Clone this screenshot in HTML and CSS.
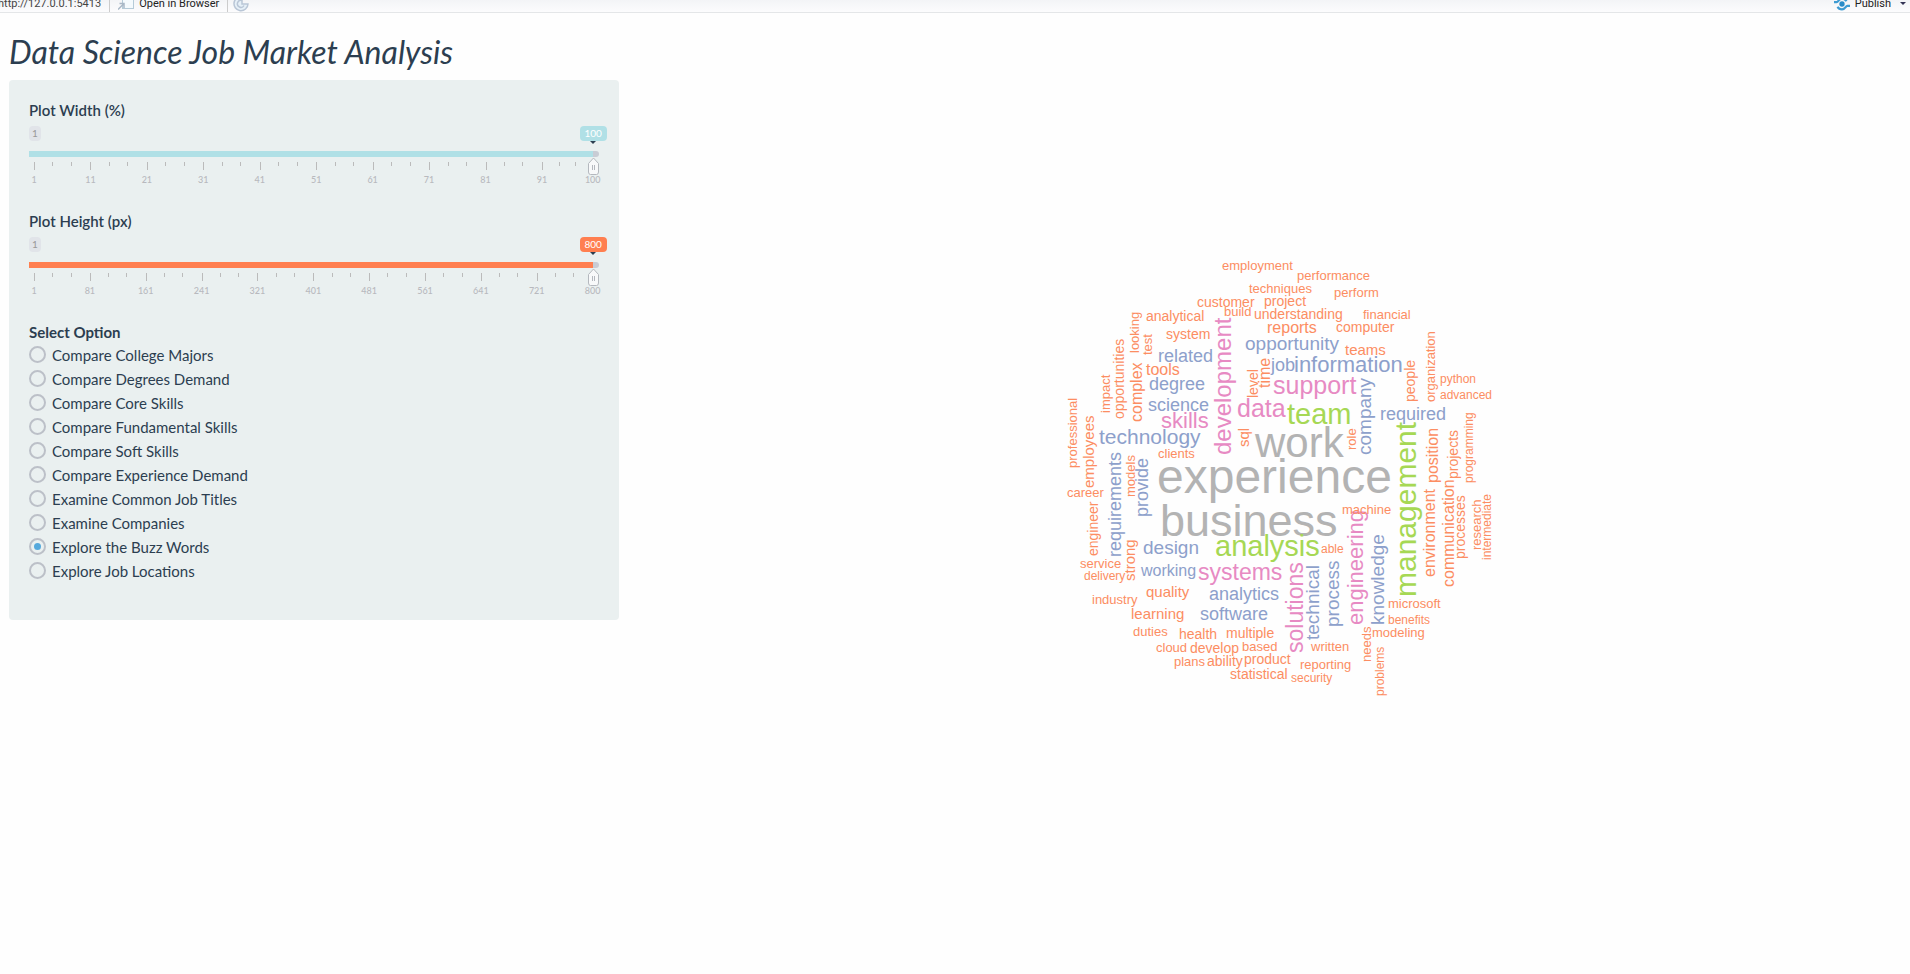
FILE: index.html
```html
<!DOCTYPE html>
<html lang="en">
<head>
<meta charset="utf-8">
<title>Data Science Job Market Analysis</title>
<link rel="stylesheet" href="styles.css">
</head>
<body>
<header class="viewer-bar">
  <span class="url">http://127.0.0.1:5413</span>
  <span class="sep"></span>
  <button class="tool" type="button">
    <svg width="16" height="14" viewBox="0 0 16 14" aria-hidden="true"><rect x="4.5" y=".5" width="11" height="11" fill="#f4fafd" stroke="#b5cbd8"/><path d="M5 1h10v2H5z" fill="#a9cfe6"/><path d="M0 12.500L5.500 7M1.500 6.500H6V11" fill="none" stroke="#a9b8c6" stroke-width="1.500"/></svg>
    <span>Open in Browser</span>
  </button>
  <span class="sep"></span>
  <button class="tool reload" type="button" aria-label="Reload">
    <svg width="16" height="16" viewBox="0 0 16 16" aria-hidden="true"><path d="M10 1A7 7 0 1 0 15 8H9V4" fill="#e6f0f8" stroke="#b9c6d6" stroke-width="1.500"/><path d="M9 4.500A3.500 3.500 0 1 0 11 9.500" fill="none" stroke="#b9c6d6" stroke-width="1.500"/></svg>
  </button>
  <button class="tool publish" type="button">
    <svg width="16" height="16" viewBox="0 0 18 16" aria-hidden="true"><circle cx="9" cy="8" r="3" fill="#2a8cc8"/><path d="M0 6h3c2 0 2-4 6-4 3 0 4 1 5 3M18 10h-3c-2 0-2 4-6 4-3 0-4-1-5-3" fill="none" stroke="#3d9bd2" stroke-width="2.500"/></svg>
    <span>Publish</span>
    <i class="caret"></i>
  </button>
</header>

<h1>Data Science Job Market Analysis</h1>

<div class="row">
  <div class="side-col">
    <form class="panel">
      <div class="slider blue">
        <label for="plot-width">Plot Width (%)</label>
        <div class="tags"><span class="tag min">1</span><output class="tag now" for="plot-width">100</output></div>
        <input id="plot-width" type="range" min="1" max="100" value="100">
        <div class="scale">
          <span><b>1</b></span><span><b>11</b></span><span><b>21</b></span><span><b>31</b></span><span><b>41</b></span><span><b>51</b></span><span><b>61</b></span><span><b>71</b></span><span><b>81</b></span><span class="short"><b>91</b></span><span class="end"><b>100</b></span>
        </div>
      </div>
      <div class="slider coral">
        <label for="plot-height">Plot Height (px)</label>
        <div class="tags"><span class="tag min">1</span><output class="tag now" for="plot-height">800</output></div>
        <input id="plot-height" type="range" min="1" max="800" value="800">
        <div class="scale">
          <span><b>1</b></span><span><b>81</b></span><span><b>161</b></span><span><b>241</b></span><span><b>321</b></span><span><b>401</b></span><span><b>481</b></span><span><b>561</b></span><span><b>641</b></span><span><b>721</b></span><span class="end"><b>800</b></span>
        </div>
      </div>
      <fieldset class="options">
        <legend>Select Option</legend>
        <label><input type="radio" name="option">Compare College Majors</label>
        <label><input type="radio" name="option">Compare Degrees Demand</label>
        <label><input type="radio" name="option">Compare Core Skills</label>
        <label><input type="radio" name="option">Compare Fundamental Skills</label>
        <label><input type="radio" name="option">Compare Soft Skills</label>
        <label><input type="radio" name="option">Compare Experience Demand</label>
        <label><input type="radio" name="option">Examine Common Job Titles</label>
        <label><input type="radio" name="option">Examine Companies</label>
        <label><input type="radio" name="option" checked>Explore the Buzz Words</label>
        <label><input type="radio" name="option">Explore Job Locations</label>
      </fieldset>
    </form>
  </div>

  <main class="plot">
    <svg class="cloud" width="430" height="450" viewBox="1065 255 430 450" role="img" aria-label="Buzz word cloud">
      <g class="gray">
        <text x="1157" y="493" font-size="48">experience</text>
        <text x="1160" y="536" font-size="45">business</text>
        <text x="1255" y="457" font-size="42">work</text>
      </g>
      <g class="green">
        <text x="1215" y="556" font-size="29">analysis</text>
        <text x="1287" y="424" font-size="29">team</text>
        <text transform="translate(1416 597) rotate(-90)" font-size="30">management</text>
      </g>
      <g class="pink">
        <text x="1237" y="417" font-size="25">data</text>
        <text x="1273" y="394" font-size="25">support</text>
        <text x="1198" y="580" font-size="23">systems</text>
        <text x="1161" y="428" font-size="22">skills</text>
        <text transform="translate(1231 455) rotate(-90)" font-size="24">development</text>
        <text transform="translate(1303 653) rotate(-90)" font-size="23">solutions</text>
        <text transform="translate(1363 625) rotate(-90)" font-size="22">engineering</text>
      </g>
      <g class="blue-words">
        <text x="1099" y="444" font-size="21">technology</text>
        <text x="1294" y="372" font-size="22">information</text>
        <text x="1271" y="371" font-size="18">job</text>
        <text x="1245" y="350" font-size="19">opportunity</text>
        <text x="1158" y="362" font-size="18">related</text>
        <text x="1149" y="390" font-size="18">degree</text>
        <text x="1148" y="411" font-size="18">science</text>
        <text x="1380" y="420" font-size="18">required</text>
        <text x="1143" y="554" font-size="19">design</text>
        <text x="1141" y="576" font-size="16">working</text>
        <text x="1209" y="600" font-size="18">analytics</text>
        <text x="1200" y="620" font-size="18">software</text>
        <text transform="translate(1371 455) rotate(-90)" font-size="19">company</text>
        <text transform="translate(1319 640) rotate(-90)" font-size="19">technical</text>
        <text transform="translate(1339 627) rotate(-90)" font-size="19">process</text>
        <text transform="translate(1384 625) rotate(-90)" font-size="19">knowledge</text>
        <text transform="translate(1121 557) rotate(-90)" font-size="18">requirements</text>
        <text transform="translate(1148 517) rotate(-90)" font-size="18">provide</text>
      </g>
      <g class="orange">
        <text x="1222" y="270" font-size="13">employment</text>
        <text x="1297" y="280" font-size="13">performance</text>
        <text x="1249" y="293" font-size="13">techniques</text>
        <text x="1334" y="297" font-size="13">perform</text>
        <text x="1197" y="307" font-size="14">customer</text>
        <text x="1264" y="306" font-size="14">project</text>
        <text x="1224" y="316" font-size="13">build</text>
        <text x="1254" y="319" font-size="14">understanding</text>
        <text x="1363" y="319" font-size="13">financial</text>
        <text x="1146" y="321" font-size="14">analytical</text>
        <text x="1166" y="339" font-size="14">system</text>
        <text x="1267" y="333" font-size="16">reports</text>
        <text x="1336" y="332" font-size="14">computer</text>
        <text x="1345" y="355" font-size="15">teams</text>
        <text x="1146" y="375" font-size="16">tools</text>
        <text x="1440" y="383" font-size="12">python</text>
        <text x="1440" y="399" font-size="12">advanced</text>
        <text x="1158" y="458" font-size="13">clients</text>
        <text x="1067" y="497" font-size="13">career</text>
        <text x="1080" y="568" font-size="13">service</text>
        <text x="1084" y="580" font-size="12">delivery</text>
        <text x="1092" y="604" font-size="13">industry</text>
        <text x="1146" y="597" font-size="15">quality</text>
        <text x="1131" y="619" font-size="15">learning</text>
        <text x="1133" y="636" font-size="13">duties</text>
        <text x="1179" y="639" font-size="14">health</text>
        <text x="1226" y="638" font-size="14">multiple</text>
        <text x="1156" y="652" font-size="13">cloud</text>
        <text x="1190" y="653" font-size="14">develop</text>
        <text x="1242" y="651" font-size="13">based</text>
        <text x="1174" y="666" font-size="13">plans</text>
        <text x="1207" y="666" font-size="14">ability</text>
        <text x="1244" y="664" font-size="14">product</text>
        <text x="1230" y="679" font-size="14">statistical</text>
        <text x="1291" y="682" font-size="12">security</text>
        <text x="1300" y="669" font-size="13">reporting</text>
        <text x="1311" y="651" font-size="13">written</text>
        <text x="1321" y="553" font-size="12">able</text>
        <text x="1342" y="514" font-size="13">machine</text>
        <text x="1388" y="608" font-size="13">microsoft</text>
        <text x="1388" y="624" font-size="12">benefits</text>
        <text x="1372" y="637" font-size="13">modeling</text>
        <text transform="translate(1139 353) rotate(-90)" font-size="13">looking</text>
        <text transform="translate(1152 355) rotate(-90)" font-size="13">test</text>
        <text transform="translate(1124 419) rotate(-90)" font-size="14">opportunities</text>
        <text transform="translate(1142 422) rotate(-90)" font-size="16">complex</text>
        <text transform="translate(1110 413) rotate(-90)" font-size="13">impact</text>
        <text transform="translate(1077 468) rotate(-90)" font-size="13">professional</text>
        <text transform="translate(1094 488) rotate(-90)" font-size="15">employees</text>
        <text transform="translate(1135 497) rotate(-90)" font-size="13">models</text>
        <text transform="translate(1249 447) rotate(-90)" font-size="15">sql</text>
        <text transform="translate(1258 398) rotate(-90)" font-size="14">level</text>
        <text transform="translate(1270 388) rotate(-90)" font-size="16">time</text>
        <text transform="translate(1356 450) rotate(-90)" font-size="13">role</text>
        <text transform="translate(1415 402) rotate(-90)" font-size="14">people</text>
        <text transform="translate(1435 402) rotate(-90)" font-size="13">organization</text>
        <text transform="translate(1438 483) rotate(-90)" font-size="16">position</text>
        <text transform="translate(1458 479) rotate(-90)" font-size="14">projects</text>
        <text transform="translate(1473 483) rotate(-90)" font-size="12">programming</text>
        <text transform="translate(1435 577) rotate(-90)" font-size="16">environment</text>
        <text transform="translate(1454 587) rotate(-90)" font-size="16">communication</text>
        <text transform="translate(1465 559) rotate(-90)" font-size="14">processes</text>
        <text transform="translate(1481 550) rotate(-90)" font-size="13">research</text>
        <text transform="translate(1491 560) rotate(-90)" font-size="12">intermediate</text>
        <text transform="translate(1098 556) rotate(-90)" font-size="14">engineer</text>
        <text transform="translate(1135 581) rotate(-90)" font-size="15">strong</text>
        <text transform="translate(1371 662) rotate(-90)" font-size="13">needs</text>
        <text transform="translate(1384 696) rotate(-90)" font-size="12">problems</text>
      </g>
    </svg>
  </main>
</div>
</body>
</html>
```
FILE: styles.css
```css
* { box-sizing: border-box; }

body {
  margin: 0;
  background: #fefefe;
  color: #2c3e50;
  font: 15px/21px Lato, sans-serif;
}

/* Viewer toolbar, scrolled partly out of view */
.viewer-bar {
  display: flex;
  align-items: center;
  height: 20px;
  margin-top: -7px;
  padding: 2px 4px 0 0;
  background: linear-gradient(#eef0f3, #fcfcfd);
  border-bottom: 1px solid #e4e6e8;
  color: #444;
  font: 11px/16px Roboto, sans-serif;
}
.url { margin-left: -2px; }
.sep { width: 1px; height: 16px; margin: 0 8px; background: #ccc; }
.tool {
  display: flex;
  align-items: center;
  gap: 5px;
  padding: 0;
  border: 0;
  background: none;
  color: #222;
  font: inherit;
}
.tool.reload { margin-left: -3px; }
.tool.publish { margin-left: auto; }
.caret {
  margin-left: 4px;
  border: 3px solid transparent;
  border-top-color: #335;
  border-bottom: 0;
}

h1 {
  margin: 19px 0 8px 9px;
  font: italic 400 32px/40px Lato, sans-serif;
}

.row { display: flex; align-items: flex-start; }
.side-col { width: 33.3333%; padding: 0 18px 0 9px; }
.panel {
  padding: 20px 20px 37px;
  border-radius: 4px;
  background: #eaf0f0;
}

.slider { height: 111px; }
.slider > label { display: block; font-weight: 600; }
.blue { --bar: #b0e0e6; }
.coral { --bar: #ff7f50; }

.tags { display: flex; justify-content: space-between; margin: 5px 0 10px; }
.tag {
  position: relative;
  padding: 0 3px;
  border-radius: 4px;
  font-size: 10px;
  line-height: 15px;
  text-align: center;
}
.tag.min { width: 12px; background: #e1e4e9; color: #999; }
.tag.now { width: 27px; margin-right: -8px; background: var(--bar); color: #fff; }
.tag.now::after {
  content: "";
  position: absolute;
  top: 100%;
  left: 50%;
  margin-left: -3px;
  border: 3px solid transparent;
  border-top-color: #2c3e50;
  border-bottom: 0;
}

input[type="range"] {
  appearance: none;
  display: block;
  width: 100%;
  height: 6px;
  margin: 0;
  background: none;
}
input[type="range"]::-webkit-slider-runnable-track {
  height: 6px;
  border-radius: 0 4px 4px 0;
  background: linear-gradient(90deg, var(--bar) calc(100% - 6px), #c8ccd4 calc(100% - 6px));
}
input[type="range"]::-webkit-slider-thumb {
  appearance: none;
  width: 11px;
  height: 18px;
  margin-top: 6px;
  background: url("data:image/svg+xml,%3Csvg xmlns='http://www.w3.org/2000/svg' width='11' height='18'%3E%3Cpath d='M5.500 1L10.500 6.500V15Q10.500 17.500 8.500 17.500H2.500Q.5 17.500 .5 15V6.500Z' fill='%23f8f9fa' stroke='%23b4b8be'/%3E%3Cpath d='M4.500 8v5M6.500 8v5' stroke='%23b4b8be'/%3E%3C/svg%3E");
}

.scale { display: flex; margin: 5px 6px 0 5px; }
.scale span {
  flex: 10 1 0;
  min-width: 0;
  height: 24px;
  padding-top: 11px;
  background:
    linear-gradient(#bbb, #bbb) 0 0 / 1px 8px no-repeat,
    linear-gradient(#bbb, #bbb) 33.333% 0 / 1px 4px no-repeat,
    linear-gradient(#bbb, #bbb) 66.667% 0 / 1px 4px no-repeat;
}
.scale .short { flex-grow: 9; }
.scale .end { flex: 0 0 0; width: 0; background: none; }
.scale b {
  display: block;
  width: 30px;
  margin-left: -15px;
  color: #b8b9be;
  font-size: 9px;
  font-weight: 500;
  line-height: 13px;
  text-align: center;
}

.options { margin: 0; padding: 0; border: 0; }
.options legend { padding: 0; font-weight: 700; }
.options label { display: flex; align-items: center; gap: 6px; height: 24px; }
input[type="radio"] {
  appearance: none;
  display: grid;
  place-items: center;
  width: 17px;
  height: 17px;
  margin: 0 0 2px;
  border: 2px solid #bcc0c8;
  border-radius: 50%;
}
input[type="radio"]:checked::before {
  content: "";
  width: 7px;
  height: 7px;
  border-radius: 50%;
  background: #56a9dc;
}

.plot {
  display: flex;
  flex: 1;
  align-items: center;
  justify-content: center;
  min-height: 800px;
  padding-left: 13px;
}
.cloud { font-family: "Liberation Sans", Arial, sans-serif; }
.gray { fill: #b3b3b3; }
.green { fill: #a6d854; }
.pink { fill: #e78ac3; }
.blue-words { fill: #8da0cb; }
.orange { fill: #fc8d62; }
```
